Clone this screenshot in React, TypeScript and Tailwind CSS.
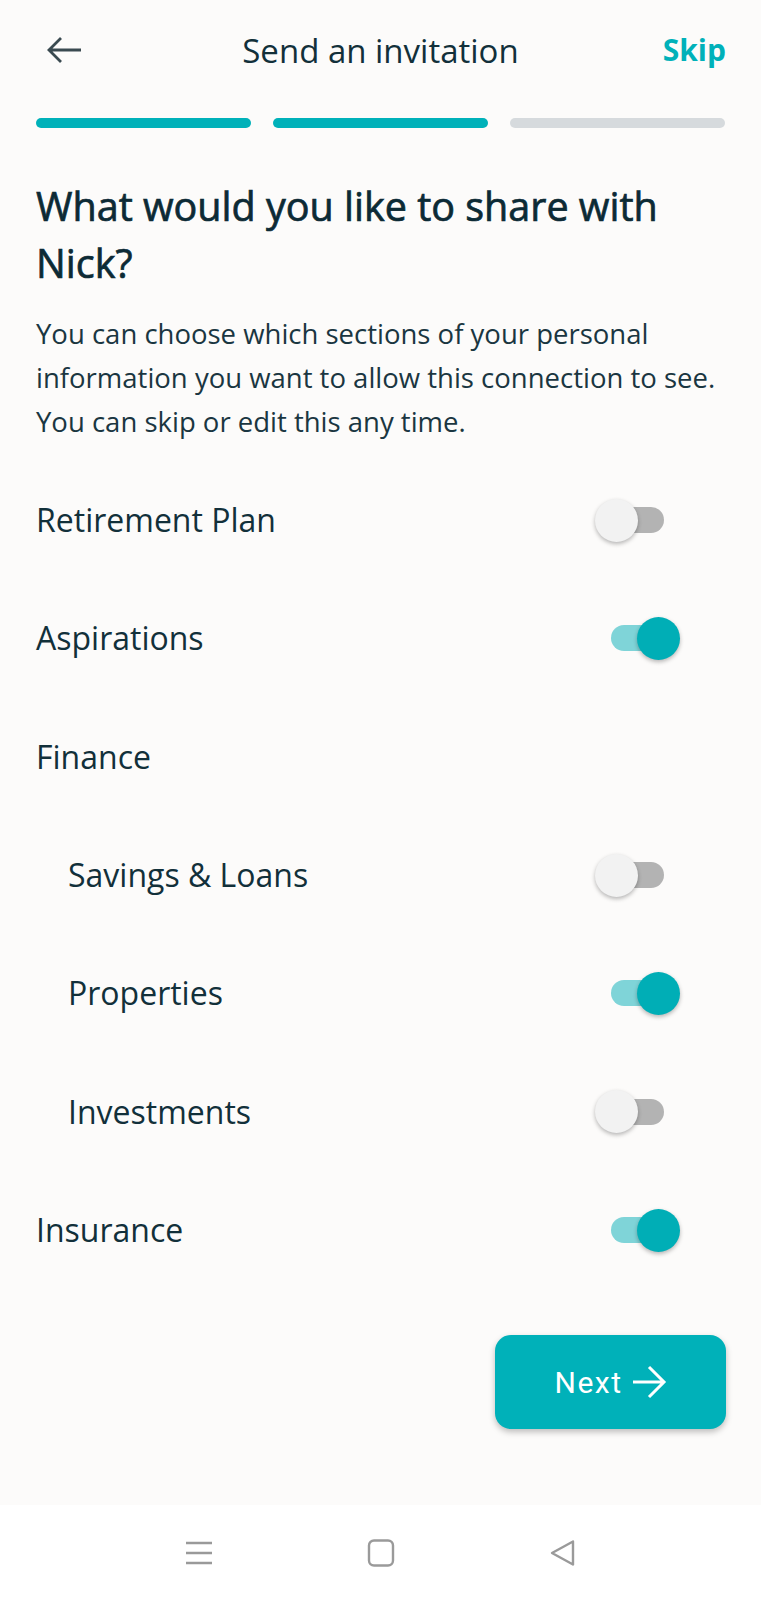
import React from "react";

function Toggle({ on }: { on: boolean }) {
  return (
    <div className="relative h-[43px] w-[85px] shrink-0">
      <div
        className={`absolute left-[16px] top-[8.5px] h-[26px] w-[53px] rounded-full ${
          on ? "bg-[#7fd4d8]" : "bg-[#b3b3b3]"
        }`}
      />
      <div
        className={`absolute top-0 h-[43px] w-[43px] rounded-full shadow-[0_2px_4px_rgba(0,0,0,0.28)] ${
          on ? "left-[42px] bg-[#00aeb6]" : "left-0 bg-[#f2f2f2]"
        }`}
      />
    </div>
  );
}

function Row({ label, on, indent }: { label: string; on?: boolean; indent?: boolean }) {
  return (
    <div
      className={`flex h-[118.33px] items-center justify-between pr-[81px] ${
        indent ? "pl-[68px]" : "pl-9"
      }`}
    >
      <span className="text-[32px] leading-none text-[#12303a]">{label}</span>
      {on !== undefined && <Toggle on={on} />}
    </div>
  );
}

export default function App() {
  return (
    <div className="flex h-[1600px] w-[761px] flex-col bg-[#fcfbfa] font-['Open_Sans',sans-serif]">
      {/* Header */}
      <div className="grid h-[100px] grid-cols-[1fr_auto_1fr] items-center">
        <div className="pl-[46px]">
          <svg width="36" height="28" viewBox="0 0 36 28" fill="none">
            <path
              d="M35 14H3M15 2L3 14L15 26"
              stroke="#3a4a50"
              strokeWidth="2.8"
            />
          </svg>
        </div>
        <div className="text-[33px] leading-none text-[#12303a]">Send an invitation</div>
        <div className="justify-self-end pr-[35px] text-[30px] font-bold leading-none text-[#00b1b9]">
          Skip
        </div>
      </div>

      {/* Progress */}
      <div className="mt-[18px] flex gap-[22px] px-9">
        <div className="h-[10px] flex-1 rounded-full bg-[#00b1b9]" />
        <div className="h-[10px] flex-1 rounded-full bg-[#00b1b9]" />
        <div className="h-[10px] flex-1 rounded-full bg-[#d6dadd]" />
      </div>

      {/* Heading */}
      <h1 className="mt-[50px] px-9 text-[39.5px] font-normal leading-[57px] text-[#0c2a35] [-webkit-text-stroke:0.7px_#0c2a35]">
        What would you like to share with Nick?
      </h1>

      <p className="mt-[20px] pl-9 pr-[28px] text-[27.5px] leading-[44px] text-[#1a3641]">
        You can choose which sections of your personal information you want to allow this
        connection to see. You can skip or edit this any time.
      </p>

      {/* List */}
      <div className="mt-[17px] flex flex-col">
        <Row label="Retirement Plan" on={false} />
        <Row label="Aspirations" on={true} />
        <Row label="Finance" />
        <Row label="Savings & Loans" on={false} indent />
        <Row label="Properties" on={true} indent />
        <Row label="Investments" on={false} indent />
        <Row label="Insurance" on={true} />
      </div>

      {/* Next button */}
      <div className="mt-[46px] flex justify-end pr-[35px]">
        <button className="flex h-[94px] w-[231px] items-center justify-center gap-[8px] rounded-[16px] bg-[#00b1b9] shadow-[0_3px_6px_rgba(0,0,0,0.25)]">
          <span className="font-['Roboto',sans-serif] text-[30px] font-normal tracking-[0.05em] text-white">
            Next
          </span>
          <svg width="36" height="34" viewBox="0 0 36 34" fill="none">
            <path d="M2 17H33M18 2L33 17L18 32" stroke="white" strokeWidth="3" />
          </svg>
        </button>
      </div>

      {/* Nav bar */}
      <div className="mt-auto flex h-[95px] items-center justify-center gap-[122px] bg-white">
        <div className="flex w-[60px] justify-center">
          <svg width="28" height="28" viewBox="0 0 28 28" fill="none">
            <path d="M1 4H27M1 14H27M1 24H27" stroke="#9a9a9a" strokeWidth="2.4" />
          </svg>
        </div>
        <div className="flex w-[60px] justify-center">
          <svg width="28" height="28" viewBox="0 0 28 28" fill="none">
            <rect x="2" y="1.5" width="24" height="25" rx="5" stroke="#9a9a9a" strokeWidth="2.4" />
          </svg>
        </div>
        <div className="flex w-[60px] justify-center">
          <svg width="28" height="28" viewBox="0 0 28 28" fill="none">
            <path
              d="M24 2.5L3 14L24 25.5Z"
              stroke="#9a9a9a"
              strokeWidth="2.4"
              strokeLinejoin="round"
            />
          </svg>
        </div>
      </div>
    </div>
  );
}
